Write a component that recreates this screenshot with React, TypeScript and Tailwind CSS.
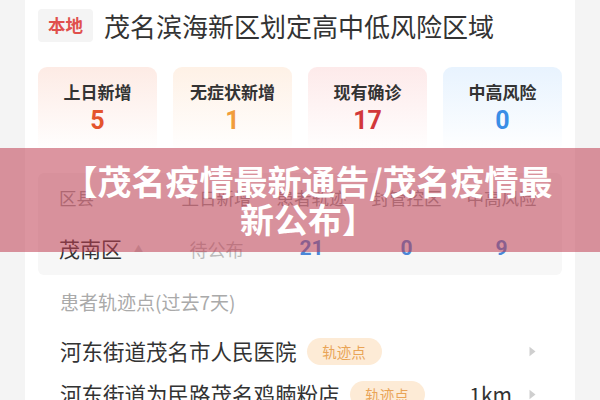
import React from "react";

type Stat = { label: string; value: string; bg: string; color: string };

const stats: Stat[] = [
  { label: "上日新增", value: "5", bg: "bg-gradient-to-b from-[#fdebe5] to-white", color: "text-[#e4542c]" },
  { label: "无症状新增", value: "1", bg: "bg-gradient-to-b from-[#fef1e6] to-white", color: "text-[#f19d3b]" },
  { label: "现有确诊", value: "17", bg: "bg-gradient-to-b from-[#fdeaea] to-white", color: "text-[#d2383a]" },
  { label: "中高风险", value: "0", bg: "bg-gradient-to-b from-[#e8f3fe] to-white", color: "text-[#3a8ee6]" },
];

function Arrow() {
  return (
    <svg width="7" height="11" viewBox="0 0 7 11" className="shrink-0">
      <path d="M0.5 0.8 L6.5 5.5 L0.5 10.2 Z" fill="#cfcfcf" />
    </svg>
  );
}

function Tag() {
  return (
    <span className="ml-[10px] flex h-[27px] w-[75px] shrink-0 items-center justify-center rounded-full bg-[#fdebd6] text-[14.5px] text-[#e9a456]">
      轨迹点
    </span>
  );
}

function TrackRow({ name, dist }: { name: string; dist?: string }) {
  return (
    <div className="flex h-[43px] items-center pl-[22px] pr-[26px]">
      <span className="text-[21.5px] text-[#333] whitespace-nowrap">{name}</span>
      <Tag />
      <span className="flex-1" />
      {dist && <span className="mr-[17px] text-[21px] text-[#333]">{dist}</span>}
      <Arrow />
    </div>
  );
}

export default function App() {
  return (
    <div className="relative h-[400px] w-[600px] overflow-hidden bg-[#f4f4f4] font-['Noto_Sans_CJK_SC','Noto_Sans',sans-serif]">
      <div className="mx-[25px] h-full bg-white px-[13px] pt-[9px]">
        {/* heading */}
        <div className="flex h-[33px] items-center">
          <span className="flex h-[33px] items-center rounded-[4px] bg-[#f4f4f4] px-[10px] text-[17.5px] font-bold text-[#e0504c]">
            本地
          </span>
          <span className="ml-[11px] text-[26px] leading-none text-[#333]">
            茂名滨海新区划定高中低风险区域
          </span>
        </div>

        {/* summary cards */}
        <div className="mt-[25px] grid grid-cols-4 gap-[16px]">
          {stats.map((s) => (
            <div key={s.label} className={`flex h-[86px] flex-col items-center rounded-[9px] pt-[12px] ${s.bg}`}>
              <span className="text-[17px] font-bold leading-[26px] text-[#333]">{s.label}</span>
              <span className={`mt-[2px] font-['Roboto',sans-serif] text-[25px] font-bold leading-[28px] ${s.color}`}>
                {s.value}
              </span>
            </div>
          ))}
        </div>

        {/* district table */}
        <div className="mt-[20px] rounded-[6px] bg-[#f7f7f7] pl-[21px]">
          <div className="grid h-[50px] grid-cols-[110px_95px_95px_95px_95px] items-center text-[17.5px] text-[#999]">
            <span>区县</span>
            <span className="text-center">上日新增</span>
            <span className="text-center">患者轨迹</span>
            <span className="text-center">封管控区</span>
            <span className="text-center">中高风险</span>
          </div>
          <div className="grid h-[52px] grid-cols-[110px_95px_95px_95px_95px] items-center">
            <span className="flex items-center text-[21px] text-[#333]">
              茂南区
              <span className="ml-[12px] text-[9px] text-[#c8c8c8]">▲</span>
            </span>
            <span className="text-center text-[18px] text-[#bbb]">待公布</span>
            <span className="text-center font-['Roboto',sans-serif] text-[21px] font-bold text-[#4a87d8]">21</span>
            <span className="text-center font-['Roboto',sans-serif] text-[21px] font-bold text-[#4a87d8]">0</span>
            <span className="text-center font-['Roboto',sans-serif] text-[21px] font-bold text-[#4a87d8]">9</span>
          </div>
        </div>

        {/* track points */}
        <div className="flex h-[55px] items-center pl-[22px] text-[19px] text-[#aaa]">
          患者轨迹点(过去7天)
        </div>
        <TrackRow name="河东街道茂名市人民医院" />
        <TrackRow name="河东街道为民路茂名鸡腩粉店" dist="1km" />
      </div>

      {/* title banner */}
      <div className="absolute left-0 top-[148px] flex h-[104px] w-full items-center justify-center bg-[rgba(192,62,82,0.55)] pl-[16px]">
        <p className="max-w-[505px] text-center text-[34px] font-bold leading-[38px] text-white">
          【茂名疫情最新通告/茂名疫情最新公布】
        </p>
      </div>
    </div>
  );
}
